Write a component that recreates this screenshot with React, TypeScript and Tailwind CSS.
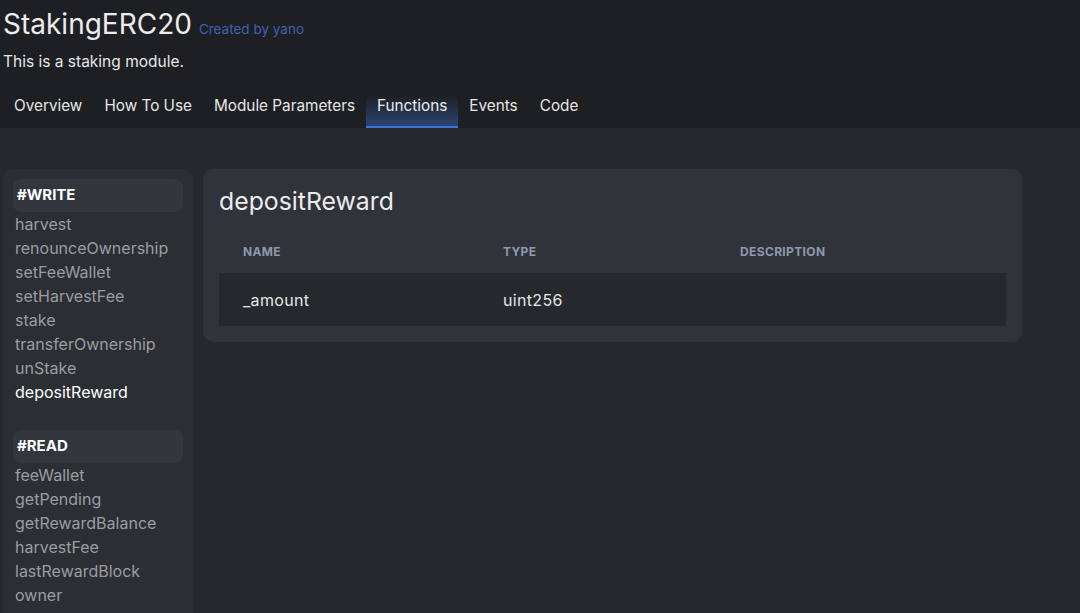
import React from "react";

const writeFns = ["harvest","renounceOwnership","setFeeWallet","setHarvestFee","stake","transferOwnership","unStake","depositReward"];
const readFns = ["feeWallet","getPending","getRewardBalance","harvestFee","lastRewardBlock","owner"];

export default function App() {
  const tabs = ["Overview","How To Use","Module Parameters","Functions","Events","Code"];
  return (
    <div className="w-[1080px] h-[613px] overflow-hidden bg-[#25282d] text-[#e6e6e6]" style={{fontFamily: "Inter, 'Noto Sans', sans-serif"}}>
      <div className="bg-[#1e1f23] pl-[3px]">
        <div className="flex items-baseline gap-[7px] pt-[4px] h-[44px]">
          <span className="text-[28px] leading-[40px] text-[#ececec]">StakingERC20</span>
          <span className="text-[13.5px] text-[#3d62b3]">Created by yano</span>
        </div>
        <div className="text-[15.5px] leading-[24px] text-[#e6e6e6] pt-[6px]">This is a staking module.</div>
        <div className="flex mt-[21px] h-[33px]">
          {tabs.map(t => (
            <div key={t} className={t === "Functions"
              ? "px-[11px] text-[15.3px] leading-[22px] text-[#ececec] bg-gradient-to-b from-[#1e1f23] to-[#2a4273] border-b-2 border-[#3d72d6]"
              : "px-[11px] text-[15.3px] leading-[22px] text-[#e6e6e6]"}>{t}</div>
          ))}
        </div>
      </div>
      <div className="flex gap-[10px] pl-[3px] pt-[41px]">
        <div className="w-[190px] h-[460px] bg-[#2b2e33] rounded-t-[10px] p-[10px] shrink-0">
          <div className="h-[33px] rounded-[8px] bg-[#33363c] flex items-center px-[4px] font-bold text-[15px] text-white">#WRITE</div>
          {writeFns.map(f => (
            <div key={f} className={"px-[2px] text-[16px] leading-[24px] " + (f === "depositReward" ? "text-white" : "text-[#9b9da1]")}>{f}</div>
          ))}
          <div className="h-[33px] mt-[26px] rounded-[8px] bg-[#33363c] flex items-center px-[4px] font-bold text-[15px] text-white">#READ</div>
          {readFns.map(f => (
            <div key={f} className="px-[2px] text-[16px] leading-[24px] text-[#9b9da1]">{f}</div>
          ))}
        </div>
        <div className="w-[819px] self-start bg-[#30333a] rounded-[10px] p-[16px]">
          <div className="text-[24.8px] leading-[30px] text-[#ececec] pt-[1px]">depositReward</div>
          <div className="grid grid-cols-[260px_237px_1fr] h-[42px] items-center mt-[15px] text-[12px] font-bold tracking-[0.03em] text-[#8f99ab]">
            <div className="pl-[24px]">NAME</div>
            <div className="pl-[24px]">TYPE</div>
            <div className="pl-[24px]">DESCRIPTION</div>
          </div>
          <div className="grid grid-cols-[260px_237px_1fr] h-[53px] items-center bg-[#25282d] text-[16px] tracking-[0.02em] text-[#e6e6e6]">
            <div className="pl-[24px]">_amount</div>
            <div className="pl-[24px]">uint256</div>
            <div className="pl-[24px]"></div>
          </div>
        </div>
      </div>
    </div>
  );
}
